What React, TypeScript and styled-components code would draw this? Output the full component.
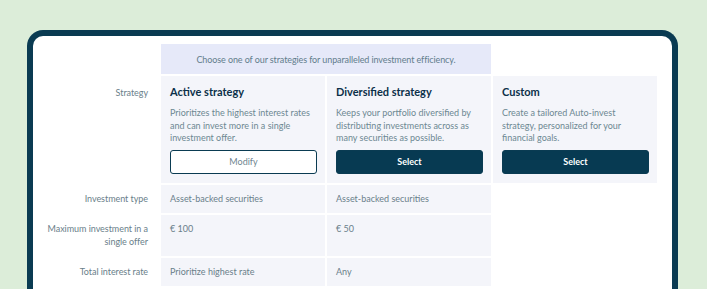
import React from "react";
import styled, { createGlobalStyle } from "styled-components";

const Global = createGlobalStyle`
  html, body { margin: 0; padding: 0; }
  body {
    background: #dcedd9;
    font-family: "Lato", "Noto Sans", sans-serif;
    overflow: hidden;
    width: 707px;
    height: 289px;
  }
`;

const Page = styled.div`
  padding: 30px 29px 0 27px;
`;

const Frame = styled.div`
  box-sizing: border-box;
  width: 651px;
  height: 259px;
  overflow: hidden;
  border: 6px solid #0a3b52;
  border-bottom: none;
  border-radius: 16px 16px 0 0;
  background: #ffffff;
  padding-top: 8px;
`;

const Grid = styled.div`
  display: grid;
  grid-template-columns: 126px 164px 164px 164px;
  column-gap: 2px;
  row-gap: 2px;
`;

const Intro = styled.div`
  grid-column: 2 / span 2;
  height: 30px;
  background: #e6e9f9;
  color: #627d8c;
  font-size: 9px;
  display: flex;
  align-items: center;
  justify-content: center;
  letter-spacing: -0.1px;
`;

const Blank = styled.div``;

const Label = styled.div<{ $top?: number }>`
  box-sizing: border-box;
  padding: ${(p) => p.$top ?? 7}px 11px 8px 14px;
  text-align: right;
  color: #6a808a;
  font-size: 9px;
  line-height: 13px;
  letter-spacing: -0.05px;
`;

const StrategyCard = styled.div`
  background: #f4f5fa;
  padding: 8px 8px 9px 9px;
  display: flex;
  flex-direction: column;
`;

const Title = styled.div`
  color: #0b3049;
  font-weight: 700;
  font-size: 11px;
  line-height: 16px;
`;

const Desc = styled.div`
  color: #6d8892;
  font-size: 9px;
  line-height: 12.5px;
  margin-top: 7px;
  height: 37.5px;
`;

const Button = styled.button<{ $primary?: boolean }>`
  box-sizing: border-box;
  margin-top: 5px;
  height: 24px;
  width: 100%;
  border-radius: 3px;
  border: 1.5px solid #0a3b52;
  background: ${(p) => (p.$primary ? "#073a52" : "#ffffff")};
  color: ${(p) => (p.$primary ? "#ffffff" : "#6f858f")};
  font-family: "Lato", "Noto Sans", sans-serif;
  font-weight: ${(p) => (p.$primary ? 700 : 400)};
  font-size: 9px;
  cursor: pointer;
`;

const Value = styled.div<{ $empty?: boolean }>`
  background: ${(p) => (p.$empty ? "transparent" : "#f4f5fa")};
  padding: 7px 9px 8px 9px;
  color: #6a808a;
  font-size: 9px;
  line-height: 13px;
`;

const strategies = [
  {
    title: "Active strategy",
    desc: "Prioritizes the highest interest rates and can invest more in a single investment offer.",
    action: "Modify",
    primary: false,
  },
  {
    title: "Diversified strategy",
    desc: "Keeps your portfolio diversified by distributing investments across as many securities as possible.",
    action: "Select",
    primary: true,
  },
  {
    title: "Custom",
    desc: "Create a tailored Auto-invest strategy, personalized for your financial goals.",
    action: "Select",
    primary: true,
  },
];

const rows = [
  { label: "Investment type", values: ["Asset-backed securities", "Asset-backed securities"] },
  { label: "Maximum investment in a single offer", values: ["€ 100", "€ 50"] },
  { label: "Total interest rate", values: ["Prioritize highest rate", "Any"] },
];

export default function App() {
  return (
    <>
      <Global />
      <Page>
        <Frame>
          <Grid>
            <Blank />
            <Intro>Choose one of our strategies for unparalleled investment efficiency.</Intro>
            <Blank />

            <Label $top={10}>Strategy</Label>
            {strategies.map((s) => (
              <StrategyCard key={s.title}>
                <Title>{s.title}</Title>
                <Desc>{s.desc}</Desc>
                <Button $primary={s.primary}>{s.action}</Button>
              </StrategyCard>
            ))}

            {rows.map((r) => (
              <React.Fragment key={r.label}>
                <Label>{r.label}</Label>
                <Value>{r.values[0]}</Value>
                <Value>{r.values[1]}</Value>
                <Value $empty />
              </React.Fragment>
            ))}
          </Grid>
        </Frame>
      </Page>
    </>
  );
}
